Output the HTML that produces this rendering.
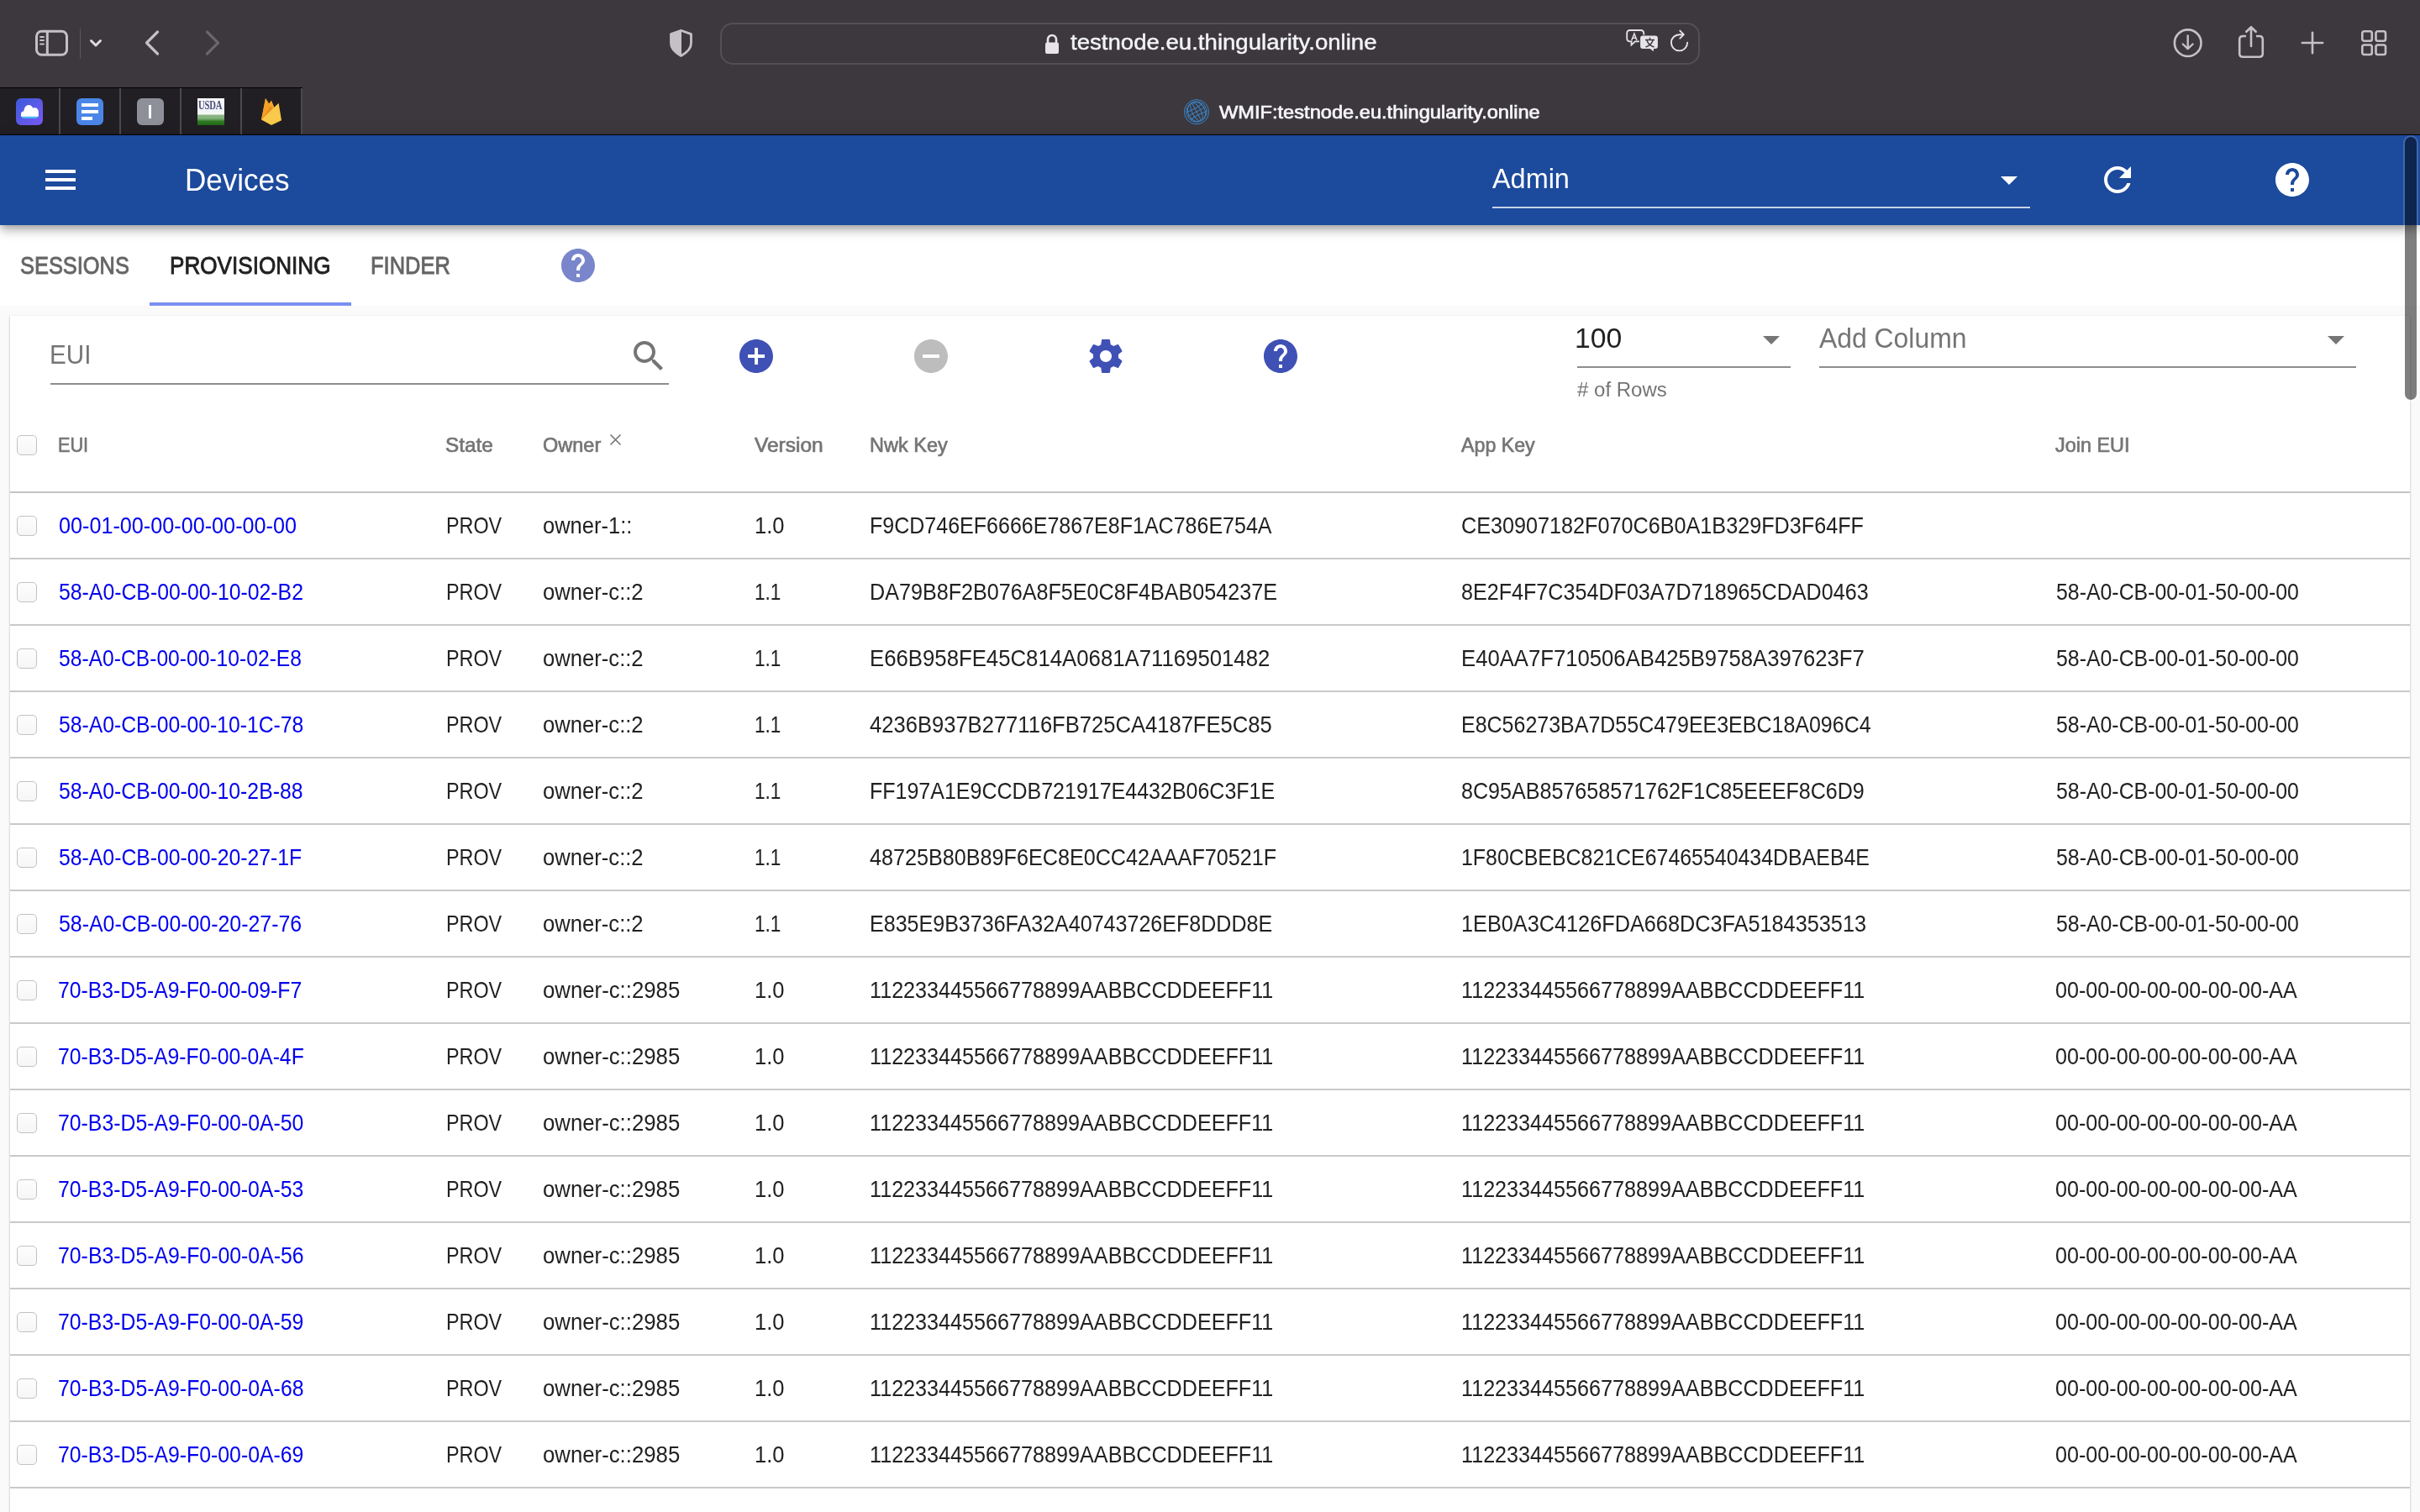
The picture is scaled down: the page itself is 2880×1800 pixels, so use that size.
<!DOCTYPE html><html><head><meta charset="utf-8"><style>
*{margin:0;padding:0;box-sizing:border-box}
html,body{width:2880px;height:1800px;overflow:hidden;background:#fafafa;font-family:"Liberation Sans",sans-serif}
.t{position:absolute;white-space:nowrap;transform-origin:0 0}
.ic{position:absolute;overflow:visible}
#chrome{position:absolute;left:0;top:0;width:2880px;height:161px;background:#3c383e;border-bottom:1px solid #000}
#pinned{position:absolute;left:0;top:104px;width:360px;height:56px;background:#211f23;border-top:1px solid #000}
.sep{position:absolute;top:105px;width:2px;height:55px;background:#4c494e}
.pi{position:absolute;top:117px;width:32px;height:32px;border-radius:6px;overflow:hidden}
#addr{position:absolute;left:857px;top:27px;width:1166px;height:50px;border:2px solid #525055;border-radius:15px}
#appbar{position:absolute;left:0;top:161px;width:2880px;height:107px;background:#1c4a9c;box-shadow:0 8px 10px rgba(0,0,0,.14),0 2px 20px rgba(0,0,0,.12),0 4px 8px -2px rgba(0,0,0,.22);z-index:2}
#appbar ~ .t, #appbar ~ .ic{z-index:3}
#tabs{position:absolute;left:0;top:268px;width:2880px;height:96px;background:#fff}
#card{position:absolute;left:12px;top:376px;width:2856px;height:1500px;background:#fff;box-shadow:0 1px 3px rgba(0,0,0,.2),0 1px 1px rgba(0,0,0,.14)}
.cb{position:absolute;left:20px;width:24px;height:24px;border:1.3px solid #c2c2c2;border-radius:5px;background:linear-gradient(#fdfdfd,#f6f6f6)}
.rb{position:absolute;left:12px;width:2856px;height:2px;background:#c9c9c9}
#sbar{position:absolute;left:2860px;top:161.4px;width:18px;height:316.6px;border-radius:9px;background:rgba(0,0,0,.5);background-clip:padding-box;border:2px solid rgba(255,255,255,.16);z-index:10}
</style></head><body><div id="chrome"></div>
<div id="pinned"></div>
<div class="sep" style="left:70px"></div>
<div class="sep" style="left:142px"></div>
<div class="sep" style="left:214px"></div>
<div class="sep" style="left:286px"></div>
<div class="sep" style="left:358px"></div>
<div class="pi" style="left:19px;background:linear-gradient(135deg,#3a5bd9 0%,#5a5ae6 50%,#7a58f6 100%);"><svg width="32" height="32" viewBox="0 0 32 32"><path d="M6.5 21.6 H26.4 C26.1 22.9 25.3 23.7 24 23.7 H8.9 C7.6 23.7 6.8 22.9 6.5 21.6Z" fill="#45c4f8"/><path d="M6 21.8 V18.6 C6 16.8 7.3 15.6 9.3 15.6 C9.6 11.2 11.8 7.9 15.2 7.9 C17.6 7.9 19.3 9.4 20.3 11.7 C20.9 11.4 21.5 11.3 22.2 11.3 C24.9 11.3 26.8 13.4 26.8 16.2 V21.8 Z" fill="#fff"/></svg></div>
<div class="pi" style="left:91px;background:#4a86e8;"><div style="position:absolute;left:6px;top:6px;width:20px;height:4px;background:#fff"></div><div style="position:absolute;left:6px;top:14px;width:20px;height:4px;background:#fff"></div><div style="position:absolute;left:6px;top:22px;width:13px;height:4px;background:#fff"></div></div>
<div class="pi" style="left:163px;background:#8e9099;"><div style="position:absolute;left:14px;top:8px;width:3px;height:16px;background:#fff"></div></div>
<div class="pi" style="left:235px;border-radius:0;background:linear-gradient(#fdfdff 0%,#eef0fb 40%,#f6fbf4 58%,#8fb487 64%,#7fb07a 75%,#2e7a22 86%,#22681a 100%);"><div style="position:absolute;left:1px;top:1px;font:bold 14px/16px 'Liberation Serif',serif;color:#4a4e74;transform:scaleX(.76);transform-origin:0 0;letter-spacing:-.2px;filter:blur(.45px)">USDA</div></div>
<svg style="position:absolute;left:311px;top:117px" width="24" height="32" viewBox="0 0 24 32"><path d="M0 25.6 L5 0 L12.5 11.8 z" fill="#f6a524"/><path d="M8.2 7.6 L12 2.4 L16.2 12.6 L6 22 z" fill="#f7a62a"/><path d="M0 25.6 L5 0 L11 9.8 L15.4 12.8 z" fill="#f2a127"/><path d="M0 25.6 L11 9.6 L15.5 13.5 z" fill="#ea8c1f"/><path d="M0 25.6 L20.6 5.8 L24 26.2 L12 32 z" fill="#f9c94b"/></svg>
<svg class="ic" style="left:40px;top:34px" width="44" height="34" viewBox="0 0 44 34"><rect x="3.5" y="3.2" width="36" height="28" rx="6" fill="none" stroke="#c4c1c6" stroke-width="3"/><line x1="16.3" y1="3" x2="16.3" y2="31" stroke="#c4c1c6" stroke-width="3"/><g stroke="#c4c1c6" stroke-width="2" stroke-linecap="round"><line x1="8" y1="10" x2="12" y2="10"/><line x1="8" y1="14" x2="12" y2="14"/><line x1="8" y1="18.5" x2="12" y2="18.5"/></g></svg>
<div style="position:absolute;left:94.5px;top:34px;width:1px;height:36px;background:#5a575c"></div>
<svg class="ic" style="left:104px;top:44px" width="20" height="15" viewBox="0 0 20 15"><path d="M4.5 4.5 L10 10 L15.5 4.5" fill="none" stroke="#dedbe0" stroke-width="3" stroke-linecap="round" stroke-linejoin="round"/></svg>
<svg class="ic" style="left:168px;top:34px" width="26" height="34" viewBox="0 0 26 34"><path d="M19.5 4 L6.5 17 L19.5 30" fill="none" stroke="#c4c1c6" stroke-width="3.2" stroke-linecap="round" stroke-linejoin="round"/></svg>
<svg class="ic" style="left:240px;top:34px" width="26" height="34" viewBox="0 0 26 34"><path d="M6.5 4 L19.5 17 L6.5 30" fill="none" stroke="#6a676c" stroke-width="3.2" stroke-linecap="round" stroke-linejoin="round"/></svg>
<svg class="ic" style="left:794px;top:33px" width="34" height="38" viewBox="0 0 34 38"><path d="M16.5 3.2 L28.5 7.6 V18.6 C28.5 25.2 23.6 29.6 16.5 33.4 C9.4 29.6 4.5 25.2 4.5 18.6 V7.6 Z" fill="none" stroke="#c4c1c6" stroke-width="2.8" stroke-linejoin="round"/><path d="M16.5 3.2 L4.5 7.6 V18.6 C4.5 25.2 9.4 29.6 16.5 33.4 Z" fill="#c4c1c6" stroke="#c4c1c6" stroke-width="1"/></svg>
<div id="addr"></div>
<svg class="ic" style="left:1242px;top:40px" width="20" height="26" viewBox="0 0 20 26"><path d="M5 11 V7.5 C5 4 7.2 2 10 2 C12.8 2 15 4 15 7.5 V11" fill="none" stroke="#e6e4e8" stroke-width="2.6"/><rect x="2" y="10.5" width="16" height="13.5" rx="2" fill="#e6e4e8"/></svg>
<svg class="ic" style="left:1934px;top:33px" width="42" height="32" viewBox="0 0 42 32"><path d="M6 3 H18.5 C21 3 22.3 4.3 22.3 6.8 V12.5 C22.3 15 21 16.3 18.5 16.3 H12 L7.5 20.5 V16.3 H6 C3.5 16.3 2.2 15 2.2 12.5 V6.8 C2.2 4.3 3.5 3 6 3Z" fill="none" stroke="#e6e4e8" stroke-width="1.8"/><path d="M7.8 15 L10.9 7 L14 15 M8.8 12.2 H13" fill="none" stroke="#e6e4e8" stroke-width="1.5"/><path d="M21 9 H36 C38.4 9 39.5 10.2 39.5 12.6 V22 C39.5 24.4 38.4 25.6 36 25.6 H34.5 V29.5 L29.5 25.6 H21 C18.6 25.6 17.5 24.4 17.5 22 V12.6 C17.5 10.2 18.6 9 21 9Z" fill="#e6e4e8" stroke="#3c393e" stroke-width="1.2"/><path d="M24 14.5 H35 M29.5 11.8 V14.5 M26 15 C27 19 30 21.5 34.5 23 M33 15 C32 19 29 21.5 24.5 23" fill="none" stroke="#3c393e" stroke-width="1.4"/></svg>
<svg class="ic" style="left:1984px;top:33px" width="30" height="32" viewBox="0 0 30 32"><path d="M24.1 17.8 A9.6 9.6 0 1 1 14.5 8.2 H19" fill="none" stroke="#e6e4e8" stroke-width="1.9" stroke-linecap="round"/><path d="M15.3 3.6 L19.8 8.2 L15.3 12.7" fill="none" stroke="#e6e4e8" stroke-width="1.9" stroke-linecap="round" stroke-linejoin="round"/></svg>
<svg class="ic" style="left:2584px;top:31px" width="40" height="40" viewBox="0 0 40 40"><circle cx="19.7" cy="20.2" r="15.8" fill="none" stroke="#c4c1c6" stroke-width="2.6"/><path d="M19.7 11.5 V27 M13.8 21.5 L19.7 27.2 L25.6 21.5" fill="none" stroke="#c4c1c6" stroke-width="2.4" stroke-linecap="round" stroke-linejoin="round"/></svg>
<svg class="ic" style="left:2661px;top:28px" width="36" height="44" viewBox="0 0 36 44"><path d="M12 15 H8.2 C5.5 15 4.2 16.3 4.2 19 V35.8 C4.2 38.5 5.5 39.8 8.2 39.8 H27.8 C30.5 39.8 31.8 38.5 31.8 35.8 V19 C31.8 16.3 30.5 15 27.8 15 H24" fill="none" stroke="#c4c1c6" stroke-width="2.6"/><path d="M18 27 V4.5 M12.3 9.8 L18 4.2 L23.7 9.8" fill="none" stroke="#c4c1c6" stroke-width="2.6" stroke-linecap="round" stroke-linejoin="round"/></svg>
<svg class="ic" style="left:2735px;top:34px" width="34" height="34" viewBox="0 0 34 34"><path d="M17 4.8 V29.2 M4.8 17 H29.2" stroke="#c4c1c6" stroke-width="2.6" stroke-linecap="round"/></svg>
<svg class="ic" style="left:2808px;top:34px" width="36" height="36" viewBox="0 0 36 36"><g fill="none" stroke="#c4c1c6" stroke-width="2.6"><rect x="3.3" y="3.3" width="11.5" height="11.5" rx="2.2"/><rect x="19.5" y="3.3" width="11.5" height="11.5" rx="2.2"/><rect x="3.3" y="19.5" width="11.5" height="11.5" rx="2.2"/><rect x="19.5" y="19.5" width="11.5" height="11.5" rx="2.2"/></g></svg>
<svg class="ic" style="left:1408px;top:117px" width="32" height="32" viewBox="0 0 32 32"><defs><clipPath id="gc"><circle cx="16" cy="16" r="12.2"/></clipPath></defs><g fill="none" stroke="#3a86cc" stroke-width="0.95"><circle cx="16" cy="16.2" r="14.6" stroke-width="1"/><circle cx="16" cy="16" r="12.2"/><g clip-path="url(#gc)" transform="rotate(-28 16 16)"><ellipse cx="16" cy="16" rx="5.2" ry="12.2"/><ellipse cx="16" cy="16" rx="10" ry="12.2"/><path d="M16 3.8 V28.2"/><path d="M2 10.5 Q16 13 30 10.5 M2 16 H30 M2 21.5 Q16 19 30 21.5"/></g></g></svg>
<div class="t " style="left:1273.59px;top:37.24px;font-size:26.30px;line-height:26.30px;color:#f4f3f5;transform:scaleX(1.0492);-webkit-text-stroke:0.45px #f4f3f5;">testnode.eu.thingularity.online</div>
<div class="t " style="left:1451.00px;top:122.51px;font-size:22.20px;line-height:22.20px;color:#f6f5f7;transform:scaleX(1.0650);-webkit-text-stroke:0.7px #f6f5f7;">WMIF:testnode.eu.thingularity.online</div>
<div id="appbar"></div>
<svg class="ic" style="left:48px;top:190px" width="48" height="48" viewBox="0 0 24 24"><path fill="#fff" d="M3 18h18v-2H3v2zm0-5h18v-2H3v2zm0-7v2h18V6H3z"/></svg>
<div class="t " style="left:220.20px;top:195.51px;font-size:37.20px;line-height:37.20px;color:#fff;transform:scaleX(0.9423);">Devices</div>
<div class="t " style="left:1776.20px;top:195.13px;font-size:34.10px;line-height:34.10px;color:#fff;transform:scaleX(0.9510);">Admin</div>
<div style="position:absolute;left:1776px;top:246px;width:640px;height:2px;background:rgba(255,255,255,.76);z-index:3"></div>
<svg class="ic" style="left:2367px;top:190px" width="48" height="48" viewBox="0 0 24 24"><path fill="#fff" d="M7 10l5 5 5-5z"/></svg>
<svg class="ic" style="left:2496px;top:190px" width="48" height="48" viewBox="0 0 24 24"><path fill="#fff" d="M17.65 6.35C16.2 4.9 14.21 4 12 4c-4.42 0-7.99 3.58-7.99 8s3.57 8 7.99 8c3.73 0 6.84-2.55 7.73-6h-2.08c-.82 2.33-3.04 4-5.65 4-3.31 0-6-2.69-6-6s2.69-6 6-6c1.66 0 3.14.69 4.22 1.78L13 11h7V4l-2.35 2.35z"/></svg>
<svg class="ic" style="left:2704px;top:190px" width="48" height="48" viewBox="0 0 24 24"><path fill="#fff" d="M12 2C6.48 2 2 6.48 2 12s4.48 10 10 10 10-4.48 10-10S17.52 2 12 2zm1 17h-2v-2h2v2zm2.07-7.75l-.9.92C13.45 12.9 13 13.5 13 15h-2v-.5c0-1.1.45-2.1 1.17-2.830l1.24-1.26c.37-.36.59-.86.59-1.41 0-1.1-.9-2-2-2s-2 .9-2 2H8c0-2.21 1.79-4 4-4s4 1.79 4 4c0 .88-.36 1.68-.93 2.25z"/></svg>
<div id="sbar"></div>
<div id="tabs"></div>
<div class="t " style="left:23.76px;top:301.71px;font-size:28.94px;line-height:28.94px;color:#666666;transform:scaleX(0.8776);-webkit-text-stroke:0.9px #666666;">SESSIONS</div>
<div class="t " style="left:202.21px;top:301.71px;font-size:28.94px;line-height:28.94px;color:#212121;transform:scaleX(0.9025);-webkit-text-stroke:0.9px #212121;">PROVISIONING</div>
<div class="t " style="left:441.16px;top:301.71px;font-size:28.94px;line-height:28.94px;color:#666666;transform:scaleX(0.8803);-webkit-text-stroke:0.9px #666666;">FINDER</div>
<div style="position:absolute;left:178px;top:360px;width:240px;height:4px;background:#7c8ef0"></div>
<svg class="ic" style="left:664px;top:292px" width="48" height="48" viewBox="0 0 24 24"><path fill="#7986cb" d="M12 2C6.48 2 2 6.48 2 12s4.48 10 10 10 10-4.48 10-10S17.52 2 12 2zm1 17h-2v-2h2v2zm2.07-7.75l-.9.92C13.45 12.9 13 13.5 13 15h-2v-.5c0-1.1.45-2.1 1.17-2.830l1.24-1.26c.37-.36.59-.86.59-1.41 0-1.1-.9-2-2-2s-2 .9-2 2H8c0-2.21 1.79-4 4-4s4 1.79 4 4c0 .88-.36 1.68-.93 2.25z"/></svg>
<div id="card"></div>
<div class="t " style="left:59.13px;top:405.88px;font-size:32.04px;line-height:32.04px;color:#757575;transform:scaleX(0.9260);">EUI</div>
<div style="position:absolute;left:60px;top:456px;width:736px;height:2px;background:#8d8d8d"></div>
<svg class="ic" style="left:748px;top:400px" width="48" height="48" viewBox="0 0 24 24"><path fill="#757575" d="M15.5 14h-.79l-.28-.27C15.41 12.59 16 11.11 16 9.5 16 5.91 13.09 3 9.5 3S3 5.91 3 9.5 5.91 16 9.5 16c1.61 0 3.09-.59 4.23-1.57l.27.28v.79l5 4.99L20.49 19l-4.99-5zm-6 0C7.01 14 5 11.99 5 9.5S7.01 5 9.5 5 14 7.01 14 9.5 11.99 14 9.5 14z"/></svg>
<svg class="ic" style="left:876px;top:400px" width="48" height="48" viewBox="0 0 24 24"><path fill="#3f51b5" d="M12 2C6.48 2 2 6.48 2 12s4.48 10 10 10 10-4.48 10-10S17.52 2 12 2zm5 11h-4v4h-2v-4H7v-2h4V7h2v4h4v2z"/></svg>
<svg class="ic" style="left:1084px;top:400px" width="48" height="48" viewBox="0 0 24 24"><path fill="#bdbdbd" d="M12 2C6.48 2 2 6.480 2 12s4.48 10 10 10 10-4.48 10-10S17.52 2 12 2zm5 11H7v-2h10v2z"/></svg>
<svg class="ic" style="left:1292px;top:400px" width="48" height="48" viewBox="0 0 24 24"><path fill="#3f51b5" d="M19.43 12.98c.04-.32.07-.64.07-.98s-.03-.66-.07-.98l2.11-1.65c.19-.15.24-.42.12-.64l-2-3.46c-.12-.22-.39-.3-.61-.22l-2.49 1c-.52-.4-1.08-.73-1.69-.98l-.38-2.65C14.46 2.18 14.25 2 14 2h-4c-.25 0-.46.18-.49.42l-.38 2.65c-.61.25-1.17.59-1.690.98l-2.49-1c-.23-.09-.49 0-.61.22l-2 3.46c-.13.22-.07.49.12.64l2.11 1.65c-.04.32-.07.65-.07.98s.03.66.07.98l-2.11 1.65c-.19.15-.24.42-.12.64l2 3.46c.12.22.39.3.61.22l2.49-1c.52.4 1.08.73 1.69.98l.38 2.65c.03.24.24.42.49.42h4c.25 0 .46-.18.49-.42l.38-2.65c.61-.25 1.17-.59 1.69-.98l2.49 1c.23.09.49 0 .61-.22l2-3.46c.12-.22.07-.49-.12-.64l-2.11-1.65zM12 15.5c-1.93 0-3.5-1.57-3.5-3.5s1.57-3.5 3.5-3.5 3.5 1.57 3.5 3.5-1.57 3.5-3.5 3.5z"/></svg>
<svg class="ic" style="left:1500px;top:400px" width="48" height="48" viewBox="0 0 24 24"><path fill="#3f51b5" d="M12 2C6.48 2 2 6.48 2 12s4.48 10 10 10 10-4.48 10-10S17.52 2 12 2zm1 17h-2v-2h2v2zm2.07-7.75l-.9.92C13.45 12.9 13 13.5 13 15h-2v-.5c0-1.1.45-2.1 1.17-2.830l1.24-1.26c.37-.36.59-.86.59-1.41 0-1.1-.9-2-2-2s-2 .9-2 2H8c0-2.21 1.79-4 4-4s4 1.79 4 4c0 .88-.36 1.68-.93 2.25z"/></svg>
<div class="t " style="left:1874.47px;top:385.71px;font-size:33.07px;line-height:33.07px;color:#212121;transform:scaleX(1.0209);">100</div>
<div style="position:absolute;left:1877px;top:436px;width:254px;height:2px;background:#8d8d8d"></div>
<svg class="ic" style="left:2084px;top:380px" width="48" height="48" viewBox="0 0 24 24"><path fill="#757575" d="M7 10l5 5 5-5z"/></svg>
<div class="t " style="left:1877.00px;top:451.60px;font-size:24.80px;line-height:24.80px;color:#757575;transform:scaleX(0.9691);"># of Rows</div>
<div class="t " style="left:2165.00px;top:385.71px;font-size:33.07px;line-height:33.07px;color:#757575;transform:scaleX(0.9644);">Add Column</div>
<div style="position:absolute;left:2165px;top:436px;width:639px;height:2px;background:#8d8d8d"></div>
<svg class="ic" style="left:2756px;top:380px" width="48" height="48" viewBox="0 0 24 24"><path fill="#757575" d="M7 10l5 5 5-5z"/></svg>
<div class="cb" style="top:518px"></div>
<div class="t " style="left:69.45px;top:518.20px;font-size:24.80px;line-height:24.80px;color:#757575;transform:scaleX(0.8741);-webkit-text-stroke:0.7px #757575;">EUI</div>
<div class="t " style="left:530.25px;top:518.20px;font-size:24.80px;line-height:24.80px;color:#757575;transform:scaleX(0.9806);-webkit-text-stroke:0.7px #757575;">State</div>
<div class="t " style="left:646.32px;top:518.20px;font-size:24.80px;line-height:24.80px;color:#757575;transform:scaleX(0.9475);-webkit-text-stroke:0.7px #757575;">Owner</div>
<div class="t " style="left:898.12px;top:518.20px;font-size:24.80px;line-height:24.80px;color:#757575;transform:scaleX(0.9883);-webkit-text-stroke:0.7px #757575;">Version</div>
<div class="t " style="left:1035.10px;top:518.20px;font-size:24.80px;line-height:24.80px;color:#757575;transform:scaleX(0.9476);-webkit-text-stroke:0.7px #757575;">Nwk Key</div>
<div class="t " style="left:1739.02px;top:518.20px;font-size:24.80px;line-height:24.80px;color:#757575;transform:scaleX(0.9357);-webkit-text-stroke:0.7px #757575;">App Key</div>
<div class="t " style="left:2446.03px;top:518.20px;font-size:24.80px;line-height:24.80px;color:#757575;transform:scaleX(0.9440);-webkit-text-stroke:0.7px #757575;">Join EUI</div>
<svg class="ic" style="left:724px;top:515px" width="17" height="17" viewBox="0 0 17 17"><path d="M2.5 2.5 L14.5 14.5 M14.5 2.5 L2.5 14.5" stroke="#757575" stroke-width="1.6"/></svg>
<div class="rb" style="top:585px;height:1.5px;background:#c4c4c4"></div>
<div class="cb" style="top:614px"></div>
<div class="t " style="left:70.05px;top:612.86px;font-size:26.87px;line-height:26.87px;color:#0000ee;transform:scaleX(0.9382);">00-01-00-00-00-00-00-00</div>
<div class="t " style="left:530.71px;top:612.86px;font-size:26.87px;line-height:26.87px;color:#212121;transform:scaleX(0.8691);">PROV</div>
<div class="t " style="left:646.32px;top:612.86px;font-size:26.87px;line-height:26.87px;color:#212121;transform:scaleX(0.9497);">owner-1::</div>
<div class="t " style="left:898.17px;top:612.86px;font-size:26.87px;line-height:26.87px;color:#212121;transform:scaleX(0.9488);">1.0</div>
<div class="t " style="left:1035.38px;top:612.86px;font-size:26.87px;line-height:26.87px;color:#212121;transform:scaleX(0.9316);">F9CD746EF6666E7867E8F1AC786E754A</div>
<div class="t " style="left:1739.07px;top:612.86px;font-size:26.87px;line-height:26.87px;color:#212121;transform:scaleX(0.9380);">CE30907182F070C6B0A1B329FD3F64FF</div>
<div class="rb" style="top:664px"></div>
<div class="cb" style="top:693px"></div>
<div class="t " style="left:70.46px;top:691.86px;font-size:26.87px;line-height:26.87px;color:#0000ee;transform:scaleX(0.9236);">58-A0-CB-00-00-10-02-B2</div>
<div class="t " style="left:530.71px;top:691.86px;font-size:26.87px;line-height:26.87px;color:#212121;transform:scaleX(0.8691);">PROV</div>
<div class="t " style="left:646.31px;top:691.86px;font-size:26.87px;line-height:26.87px;color:#212121;transform:scaleX(0.9539);">owner-c::2</div>
<div class="t " style="left:898.38px;top:691.86px;font-size:26.87px;line-height:26.87px;color:#212121;transform:scaleX(0.8419);">1.1</div>
<div class="t " style="left:1035.37px;top:691.86px;font-size:26.87px;line-height:26.87px;color:#212121;transform:scaleX(0.9361);">DA79B8F2B076A8F5E0C8F4BAB054237E</div>
<div class="t " style="left:1739.32px;top:691.86px;font-size:26.87px;line-height:26.87px;color:#212121;transform:scaleX(0.9354);">8E2F4F7C354DF03A7D718965CDAD0463</div>
<div class="t " style="left:2446.86px;top:691.86px;font-size:26.87px;line-height:26.87px;color:#212121;transform:scaleX(0.9257);">58-A0-CB-00-01-50-00-00</div>
<div class="rb" style="top:743px"></div>
<div class="cb" style="top:772px"></div>
<div class="t " style="left:70.46px;top:770.86px;font-size:26.87px;line-height:26.87px;color:#0000ee;transform:scaleX(0.9174);">58-A0-CB-00-00-10-02-E8</div>
<div class="t " style="left:530.71px;top:770.86px;font-size:26.87px;line-height:26.87px;color:#212121;transform:scaleX(0.8691);">PROV</div>
<div class="t " style="left:646.31px;top:770.86px;font-size:26.87px;line-height:26.87px;color:#212121;transform:scaleX(0.9539);">owner-c::2</div>
<div class="t " style="left:898.38px;top:770.86px;font-size:26.87px;line-height:26.87px;color:#212121;transform:scaleX(0.8419);">1.1</div>
<div class="t " style="left:1035.32px;top:770.86px;font-size:26.87px;line-height:26.87px;color:#212121;transform:scaleX(0.9587);">E66B958FE45C814A0681A71169501482</div>
<div class="t " style="left:1738.92px;top:770.86px;font-size:26.87px;line-height:26.87px;color:#212121;transform:scaleX(0.9562);">E40AA7F710506AB425B9758A397623F7</div>
<div class="t " style="left:2446.86px;top:770.86px;font-size:26.87px;line-height:26.87px;color:#212121;transform:scaleX(0.9257);">58-A0-CB-00-01-50-00-00</div>
<div class="rb" style="top:822px"></div>
<div class="cb" style="top:851px"></div>
<div class="t " style="left:70.46px;top:849.86px;font-size:26.87px;line-height:26.87px;color:#0000ee;transform:scaleX(0.9201);">58-A0-CB-00-00-10-1C-78</div>
<div class="t " style="left:530.71px;top:849.86px;font-size:26.87px;line-height:26.87px;color:#212121;transform:scaleX(0.8691);">PROV</div>
<div class="t " style="left:646.31px;top:849.86px;font-size:26.87px;line-height:26.87px;color:#212121;transform:scaleX(0.9539);">owner-c::2</div>
<div class="t " style="left:898.38px;top:849.86px;font-size:26.87px;line-height:26.87px;color:#212121;transform:scaleX(0.8419);">1.1</div>
<div class="t " style="left:1035.44px;top:849.86px;font-size:26.87px;line-height:26.87px;color:#212121;transform:scaleX(0.9521);">4236B937B277116FB725CA4187FE5C85</div>
<div class="t " style="left:1738.98px;top:849.86px;font-size:26.87px;line-height:26.87px;color:#212121;transform:scaleX(0.9303);">E8C56273BA7D55C479EE3EBC18A096C4</div>
<div class="t " style="left:2446.86px;top:849.86px;font-size:26.87px;line-height:26.87px;color:#212121;transform:scaleX(0.9257);">58-A0-CB-00-01-50-00-00</div>
<div class="rb" style="top:901px"></div>
<div class="cb" style="top:930px"></div>
<div class="t " style="left:70.46px;top:928.86px;font-size:26.87px;line-height:26.87px;color:#0000ee;transform:scaleX(0.9220);">58-A0-CB-00-00-10-2B-88</div>
<div class="t " style="left:530.71px;top:928.86px;font-size:26.87px;line-height:26.87px;color:#212121;transform:scaleX(0.8691);">PROV</div>
<div class="t " style="left:646.31px;top:928.86px;font-size:26.87px;line-height:26.87px;color:#212121;transform:scaleX(0.9539);">owner-c::2</div>
<div class="t " style="left:898.38px;top:928.86px;font-size:26.87px;line-height:26.87px;color:#212121;transform:scaleX(0.8419);">1.1</div>
<div class="t " style="left:1035.38px;top:928.86px;font-size:26.87px;line-height:26.87px;color:#212121;transform:scaleX(0.9306);">FF197A1E9CCDB721917E4432B06C3F1E</div>
<div class="t " style="left:1739.33px;top:928.86px;font-size:26.87px;line-height:26.87px;color:#212121;transform:scaleX(0.9341);">8C95AB857658571762F1C85EEEF8C6D9</div>
<div class="t " style="left:2446.86px;top:928.86px;font-size:26.87px;line-height:26.87px;color:#212121;transform:scaleX(0.9257);">58-A0-CB-00-01-50-00-00</div>
<div class="rb" style="top:980px"></div>
<div class="cb" style="top:1009px"></div>
<div class="t " style="left:70.46px;top:1007.86px;font-size:26.87px;line-height:26.87px;color:#0000ee;transform:scaleX(0.9226);">58-A0-CB-00-00-20-27-1F</div>
<div class="t " style="left:530.71px;top:1007.86px;font-size:26.87px;line-height:26.87px;color:#212121;transform:scaleX(0.8691);">PROV</div>
<div class="t " style="left:646.31px;top:1007.86px;font-size:26.87px;line-height:26.87px;color:#212121;transform:scaleX(0.9539);">owner-c::2</div>
<div class="t " style="left:898.38px;top:1007.86px;font-size:26.87px;line-height:26.87px;color:#212121;transform:scaleX(0.8419);">1.1</div>
<div class="t " style="left:1035.45px;top:1007.86px;font-size:26.87px;line-height:26.87px;color:#212121;transform:scaleX(0.9371);">48725B80B89F6EC8E0CC42AAAF70521F</div>
<div class="t " style="left:1739.11px;top:1007.86px;font-size:26.87px;line-height:26.87px;color:#212121;transform:scaleX(0.9272);">1F80CBEBC821CE67465540434DBAEB4E</div>
<div class="t " style="left:2446.86px;top:1007.86px;font-size:26.87px;line-height:26.87px;color:#212121;transform:scaleX(0.9257);">58-A0-CB-00-01-50-00-00</div>
<div class="rb" style="top:1059px"></div>
<div class="cb" style="top:1088px"></div>
<div class="t " style="left:70.45px;top:1086.86px;font-size:26.87px;line-height:26.87px;color:#0000ee;transform:scaleX(0.9265);">58-A0-CB-00-00-20-27-76</div>
<div class="t " style="left:530.71px;top:1086.86px;font-size:26.87px;line-height:26.87px;color:#212121;transform:scaleX(0.8691);">PROV</div>
<div class="t " style="left:646.31px;top:1086.86px;font-size:26.87px;line-height:26.87px;color:#212121;transform:scaleX(0.9539);">owner-c::2</div>
<div class="t " style="left:898.38px;top:1086.86px;font-size:26.87px;line-height:26.87px;color:#212121;transform:scaleX(0.8419);">1.1</div>
<div class="t " style="left:1035.37px;top:1086.86px;font-size:26.87px;line-height:26.87px;color:#212121;transform:scaleX(0.9328);">E835E9B3736FA32A40743726EF8DDD8E</div>
<div class="t " style="left:1739.08px;top:1086.86px;font-size:26.87px;line-height:26.87px;color:#212121;transform:scaleX(0.9411);">1EB0A3C4126FDA668DC3FA5184353513</div>
<div class="t " style="left:2446.86px;top:1086.86px;font-size:26.87px;line-height:26.87px;color:#212121;transform:scaleX(0.9257);">58-A0-CB-00-01-50-00-00</div>
<div class="rb" style="top:1138px"></div>
<div class="cb" style="top:1167px"></div>
<div class="t " style="left:69.17px;top:1165.86px;font-size:26.87px;line-height:26.87px;color:#0000ee;transform:scaleX(0.9215);">70-B3-D5-A9-F0-00-09-F7</div>
<div class="t " style="left:530.71px;top:1165.86px;font-size:26.87px;line-height:26.87px;color:#212121;transform:scaleX(0.8691);">PROV</div>
<div class="t " style="left:646.31px;top:1165.86px;font-size:26.87px;line-height:26.87px;color:#212121;transform:scaleX(0.9591);">owner-c::2985</div>
<div class="t " style="left:898.17px;top:1165.86px;font-size:26.87px;line-height:26.87px;color:#212121;transform:scaleX(0.9488);">1.0</div>
<div class="t " style="left:1035.49px;top:1165.86px;font-size:26.87px;line-height:26.87px;color:#212121;transform:scaleX(0.9370);">112233445566778899AABBCCDDEEFF11</div>
<div class="t " style="left:1739.09px;top:1165.86px;font-size:26.87px;line-height:26.87px;color:#212121;transform:scaleX(0.9370);">112233445566778899AABBCCDDEEFF11</div>
<div class="t " style="left:2446.45px;top:1165.86px;font-size:26.87px;line-height:26.87px;color:#212121;transform:scaleX(0.9359);">00-00-00-00-00-00-00-AA</div>
<div class="rb" style="top:1217px"></div>
<div class="cb" style="top:1246px"></div>
<div class="t " style="left:69.17px;top:1244.86px;font-size:26.87px;line-height:26.87px;color:#0000ee;transform:scaleX(0.9207);">70-B3-D5-A9-F0-00-0A-4F</div>
<div class="t " style="left:530.71px;top:1244.86px;font-size:26.87px;line-height:26.87px;color:#212121;transform:scaleX(0.8691);">PROV</div>
<div class="t " style="left:646.31px;top:1244.86px;font-size:26.87px;line-height:26.87px;color:#212121;transform:scaleX(0.9591);">owner-c::2985</div>
<div class="t " style="left:898.17px;top:1244.86px;font-size:26.87px;line-height:26.87px;color:#212121;transform:scaleX(0.9488);">1.0</div>
<div class="t " style="left:1035.49px;top:1244.86px;font-size:26.87px;line-height:26.87px;color:#212121;transform:scaleX(0.9370);">112233445566778899AABBCCDDEEFF11</div>
<div class="t " style="left:1739.09px;top:1244.86px;font-size:26.87px;line-height:26.87px;color:#212121;transform:scaleX(0.9370);">112233445566778899AABBCCDDEEFF11</div>
<div class="t " style="left:2446.45px;top:1244.86px;font-size:26.87px;line-height:26.87px;color:#212121;transform:scaleX(0.9359);">00-00-00-00-00-00-00-AA</div>
<div class="rb" style="top:1296px"></div>
<div class="cb" style="top:1325px"></div>
<div class="t " style="left:69.17px;top:1323.86px;font-size:26.87px;line-height:26.87px;color:#0000ee;transform:scaleX(0.9238);">70-B3-D5-A9-F0-00-0A-50</div>
<div class="t " style="left:530.71px;top:1323.86px;font-size:26.87px;line-height:26.87px;color:#212121;transform:scaleX(0.8691);">PROV</div>
<div class="t " style="left:646.31px;top:1323.86px;font-size:26.87px;line-height:26.87px;color:#212121;transform:scaleX(0.9591);">owner-c::2985</div>
<div class="t " style="left:898.17px;top:1323.86px;font-size:26.87px;line-height:26.87px;color:#212121;transform:scaleX(0.9488);">1.0</div>
<div class="t " style="left:1035.49px;top:1323.86px;font-size:26.87px;line-height:26.87px;color:#212121;transform:scaleX(0.9370);">112233445566778899AABBCCDDEEFF11</div>
<div class="t " style="left:1739.09px;top:1323.86px;font-size:26.87px;line-height:26.87px;color:#212121;transform:scaleX(0.9370);">112233445566778899AABBCCDDEEFF11</div>
<div class="t " style="left:2446.45px;top:1323.86px;font-size:26.87px;line-height:26.87px;color:#212121;transform:scaleX(0.9359);">00-00-00-00-00-00-00-AA</div>
<div class="rb" style="top:1375px"></div>
<div class="cb" style="top:1404px"></div>
<div class="t " style="left:69.17px;top:1402.86px;font-size:26.87px;line-height:26.87px;color:#0000ee;transform:scaleX(0.9234);">70-B3-D5-A9-F0-00-0A-53</div>
<div class="t " style="left:530.71px;top:1402.86px;font-size:26.87px;line-height:26.87px;color:#212121;transform:scaleX(0.8691);">PROV</div>
<div class="t " style="left:646.31px;top:1402.86px;font-size:26.87px;line-height:26.87px;color:#212121;transform:scaleX(0.9591);">owner-c::2985</div>
<div class="t " style="left:898.17px;top:1402.86px;font-size:26.87px;line-height:26.87px;color:#212121;transform:scaleX(0.9488);">1.0</div>
<div class="t " style="left:1035.49px;top:1402.86px;font-size:26.87px;line-height:26.87px;color:#212121;transform:scaleX(0.9370);">112233445566778899AABBCCDDEEFF11</div>
<div class="t " style="left:1739.09px;top:1402.86px;font-size:26.87px;line-height:26.87px;color:#212121;transform:scaleX(0.9370);">112233445566778899AABBCCDDEEFF11</div>
<div class="t " style="left:2446.45px;top:1402.86px;font-size:26.87px;line-height:26.87px;color:#212121;transform:scaleX(0.9359);">00-00-00-00-00-00-00-AA</div>
<div class="rb" style="top:1454px"></div>
<div class="cb" style="top:1483px"></div>
<div class="t " style="left:69.17px;top:1481.86px;font-size:26.87px;line-height:26.87px;color:#0000ee;transform:scaleX(0.9246);">70-B3-D5-A9-F0-00-0A-56</div>
<div class="t " style="left:530.71px;top:1481.86px;font-size:26.87px;line-height:26.87px;color:#212121;transform:scaleX(0.8691);">PROV</div>
<div class="t " style="left:646.31px;top:1481.86px;font-size:26.87px;line-height:26.87px;color:#212121;transform:scaleX(0.9591);">owner-c::2985</div>
<div class="t " style="left:898.17px;top:1481.86px;font-size:26.87px;line-height:26.87px;color:#212121;transform:scaleX(0.9488);">1.0</div>
<div class="t " style="left:1035.49px;top:1481.86px;font-size:26.87px;line-height:26.87px;color:#212121;transform:scaleX(0.9370);">112233445566778899AABBCCDDEEFF11</div>
<div class="t " style="left:1739.09px;top:1481.86px;font-size:26.87px;line-height:26.87px;color:#212121;transform:scaleX(0.9370);">112233445566778899AABBCCDDEEFF11</div>
<div class="t " style="left:2446.45px;top:1481.86px;font-size:26.87px;line-height:26.87px;color:#212121;transform:scaleX(0.9359);">00-00-00-00-00-00-00-AA</div>
<div class="rb" style="top:1533px"></div>
<div class="cb" style="top:1562px"></div>
<div class="t " style="left:69.17px;top:1560.86px;font-size:26.87px;line-height:26.87px;color:#0000ee;transform:scaleX(0.9238);">70-B3-D5-A9-F0-00-0A-59</div>
<div class="t " style="left:530.71px;top:1560.86px;font-size:26.87px;line-height:26.87px;color:#212121;transform:scaleX(0.8691);">PROV</div>
<div class="t " style="left:646.31px;top:1560.86px;font-size:26.87px;line-height:26.87px;color:#212121;transform:scaleX(0.9591);">owner-c::2985</div>
<div class="t " style="left:898.17px;top:1560.86px;font-size:26.87px;line-height:26.87px;color:#212121;transform:scaleX(0.9488);">1.0</div>
<div class="t " style="left:1035.49px;top:1560.86px;font-size:26.87px;line-height:26.87px;color:#212121;transform:scaleX(0.9370);">112233445566778899AABBCCDDEEFF11</div>
<div class="t " style="left:1739.09px;top:1560.86px;font-size:26.87px;line-height:26.87px;color:#212121;transform:scaleX(0.9370);">112233445566778899AABBCCDDEEFF11</div>
<div class="t " style="left:2446.45px;top:1560.86px;font-size:26.87px;line-height:26.87px;color:#212121;transform:scaleX(0.9359);">00-00-00-00-00-00-00-AA</div>
<div class="rb" style="top:1612px"></div>
<div class="cb" style="top:1641px"></div>
<div class="t " style="left:69.17px;top:1639.86px;font-size:26.87px;line-height:26.87px;color:#0000ee;transform:scaleX(0.9242);">70-B3-D5-A9-F0-00-0A-68</div>
<div class="t " style="left:530.71px;top:1639.86px;font-size:26.87px;line-height:26.87px;color:#212121;transform:scaleX(0.8691);">PROV</div>
<div class="t " style="left:646.31px;top:1639.86px;font-size:26.87px;line-height:26.87px;color:#212121;transform:scaleX(0.9591);">owner-c::2985</div>
<div class="t " style="left:898.17px;top:1639.86px;font-size:26.87px;line-height:26.87px;color:#212121;transform:scaleX(0.9488);">1.0</div>
<div class="t " style="left:1035.49px;top:1639.86px;font-size:26.87px;line-height:26.87px;color:#212121;transform:scaleX(0.9370);">112233445566778899AABBCCDDEEFF11</div>
<div class="t " style="left:1739.09px;top:1639.86px;font-size:26.87px;line-height:26.87px;color:#212121;transform:scaleX(0.9370);">112233445566778899AABBCCDDEEFF11</div>
<div class="t " style="left:2446.45px;top:1639.86px;font-size:26.87px;line-height:26.87px;color:#212121;transform:scaleX(0.9359);">00-00-00-00-00-00-00-AA</div>
<div class="rb" style="top:1691px"></div>
<div class="cb" style="top:1720px"></div>
<div class="t " style="left:69.17px;top:1718.86px;font-size:26.87px;line-height:26.87px;color:#0000ee;transform:scaleX(0.9238);">70-B3-D5-A9-F0-00-0A-69</div>
<div class="t " style="left:530.71px;top:1718.86px;font-size:26.87px;line-height:26.87px;color:#212121;transform:scaleX(0.8691);">PROV</div>
<div class="t " style="left:646.31px;top:1718.86px;font-size:26.87px;line-height:26.87px;color:#212121;transform:scaleX(0.9591);">owner-c::2985</div>
<div class="t " style="left:898.17px;top:1718.86px;font-size:26.87px;line-height:26.87px;color:#212121;transform:scaleX(0.9488);">1.0</div>
<div class="t " style="left:1035.49px;top:1718.86px;font-size:26.87px;line-height:26.87px;color:#212121;transform:scaleX(0.9370);">112233445566778899AABBCCDDEEFF11</div>
<div class="t " style="left:1739.09px;top:1718.86px;font-size:26.87px;line-height:26.87px;color:#212121;transform:scaleX(0.9370);">112233445566778899AABBCCDDEEFF11</div>
<div class="t " style="left:2446.45px;top:1718.86px;font-size:26.87px;line-height:26.87px;color:#212121;transform:scaleX(0.9359);">00-00-00-00-00-00-00-AA</div>
<div class="rb" style="top:1770px"></div></body></html>
